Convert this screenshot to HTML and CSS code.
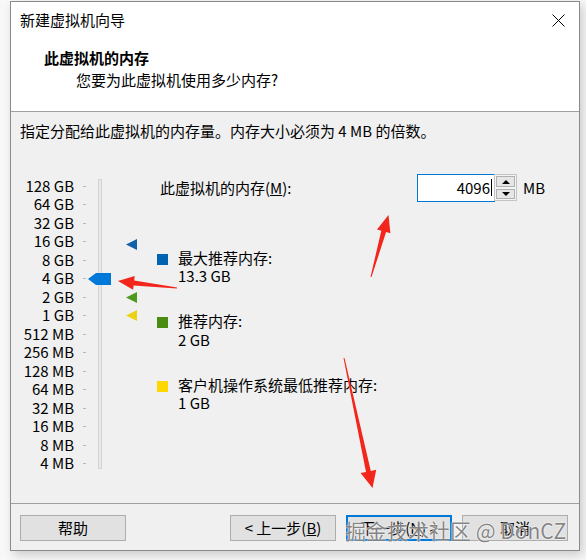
FILE: index.html
```html
<!DOCTYPE html>
<html lang="zh-CN">
<head>
    <meta charset="UTF-8">
    <title>新建虚拟机向导</title>
    <link rel="stylesheet" href="styles.css">
</head>
<body>

    <div class="wizard">
        <div class="wizard-head">
            <div class="titlebar">
                <span class="title">新建虚拟机向导</span>
                <svg class="close" width="13" height="13" viewBox="0 0 13 13">
                    <path d="M0.5 0.5 L12.5 12.5 M12.5 0.5 L0.5 12.5" stroke="#000" stroke-width="1" fill="none"/>
                </svg>
            </div>
            <div class="head-title">此虚拟机的内存</div>
            <div class="head-sub">您要为此虚拟机使用多少内存?</div>
        </div>

        <div class="wizard-body">
            <p class="intro">指定分配给此虚拟机的内存量。内存大小必须为 4 MB 的倍数。</p>

            <div class="memory">
                <div class="scale">
                    <ul class="scale-labels">
                        <li>128 GB</li>
                        <li>64 GB</li>
                        <li>32 GB</li>
                        <li>16 GB</li>
                        <li>8 GB</li>
                        <li>4 GB</li>
                        <li>2 GB</li>
                        <li>1 GB</li>
                        <li>512 MB</li>
                        <li>256 MB</li>
                        <li>128 MB</li>
                        <li>64 MB</li>
                        <li>32 MB</li>
                        <li>16 MB</li>
                        <li>8 MB</li>
                        <li>4 MB</li>
                    </ul>
                    <div class="track"></div>

                    <!-- slider thumb and the three recommendation markers -->
                    <svg class="thumb" width="23" height="12" viewBox="0 0 23 12">
                        <polygon points="0,6 8,0 23,0 23,12 8,12" fill="#0078d7"/>
                    </svg>
                    <svg class="marker marker-max" width="11" height="11" viewBox="0 0 11 11">
                        <polygon points="0,5.5 11,0 11,11" fill="#1160aa"/>
                    </svg>
                    <svg class="marker marker-rec" width="11" height="11" viewBox="0 0 11 11">
                        <polygon points="0,5.5 11,0 11,11" fill="#4f9a1c"/>
                    </svg>
                    <svg class="marker marker-min" width="11" height="11" viewBox="0 0 11 11">
                        <polygon points="0,5.5 11,0 11,11" fill="#ecd214"/>
                    </svg>
                </div>

                <div class="memory-info">
                    <div class="memory-row">
                        <label class="memory-label">此虚拟机的内存(<u>M</u>):</label>
                        <div class="memory-input"><span>4096</span><i class="caret"></i></div>
                        <div class="spin">
                            <div class="spin-btn"><span class="arrow-up"></span></div>
                            <div class="spin-btn"><span class="arrow-down"></span></div>
                        </div>
                        <span class="unit">MB</span>
                    </div>

                    <div class="legend">
                        <div class="legend-item">
                            <span class="swatch swatch-blue"></span>
                            <div>
                                <div>最大推荐内存:</div>
                                <div>13.3 GB</div>
                            </div>
                        </div>
                        <div class="legend-item">
                            <span class="swatch swatch-green"></span>
                            <div>
                                <div>推荐内存:</div>
                                <div>2 GB</div>
                            </div>
                        </div>
                        <div class="legend-item">
                            <span class="swatch swatch-yellow"></span>
                            <div>
                                <div>客户机操作系统最低推荐内存:</div>
                                <div>1 GB</div>
                            </div>
                        </div>
                    </div>
                </div>
            </div>
        </div>

        <div class="wizard-foot">
            <button class="btn">帮助</button>
            <div class="nav-buttons">
                <button class="btn">&lt; 上一步(<u>B</u>)</button>
                <button class="btn btn-default">下一步(<u>N</u>) &gt;</button>
                <button class="btn">取消</button>
            </div>
        </div>
    </div>

    <!-- red hand-drawn arrows on top of the dialog -->
    <svg class="annotations" width="586" height="560" viewBox="0 0 586 560">
        <polygon fill="#f3261b" points="118,281 134.7,276 134.2,280.4 177.1,287.5 176.9,288.5 133.6,285.4 133.1,289.8"/>
        <polygon fill="#f3261b" points="388.5,215 390.4,233.3 386.1,232.1 371.5,277.1 370.5,276.9 381.3,230.7 377,229.5"/>
        <polygon fill="#f3261b" points="372.5,488 360.6,473.1 366,471.9 343.5,358.1 344.5,357.9 370.8,470.9 376.2,469.7"/>
    </svg>

    <div class="watermark">掘金技术社区 @ DonCZ</div>

</body>
</html>
```

FILE: styles.css
```css
body {
    margin: 0;
    width: 586px;
    height: 560px;
    background-color: #f8f8f8;
    font-family: "Noto Sans CJK SC", sans-serif;
    font-size: 15px;
    color: #000;
    position: relative;
    overflow: hidden;
}

.wizard {
    margin: 1px 0 0 10px;
    width: 568px;
    border: 1px solid #8a8a8a;
    background-color: #f0f0f0;
    box-shadow: 3px 4px 10px rgba(0,0,0,0.18);
}

/* white header with title and page heading */
.wizard-head {
    height: 109px;
    background-color: white;
    border-bottom: 1px solid #a0a0a0;
}

.titlebar {
    height: 36px;
    display: flex;
    align-items: center;
    justify-content: space-between;
    padding: 0 14px 0 9px;
}

.title {
    line-height: 18px;
}

.close {
    margin-top: 1px;
}

.head-title {
    margin-top: 10px;
    padding-left: 33px;
    font-weight: bold;
    line-height: 20px;
}

.head-sub {
    margin-top: 3px;
    padding-left: 65px;
    line-height: 18.5px;
}

.wizard-body {
    height: 391px;
    padding: 10px 9px 0 9px;
    box-sizing: border-box;
}

.intro {
    margin: 0;
    line-height: 18.5px;
}

.memory {
    display: flex;
    align-items: flex-start;
    margin-top: 36.25px;
}

/* vertical slider with the size scale */
.scale {
    position: relative;
    width: 137px;
    flex-shrink: 0;
}

.scale-labels {
    list-style: none;
    margin: 0;
    padding: 0;
}

.scale-labels li {
    width: 54px;
    height: 18.5px;
    line-height: 18.5px;
    text-align: right;
    position: relative;
    white-space: nowrap;
}

.scale-labels li::after {
    content: "";
    position: absolute;
    left: 63px;
    top: 9px;
    width: 3px;
    height: 1px;
    background-color: #b8b8b8;
}

.track {
    position: absolute;
    left: 78px;
    top: 2px;
    bottom: 4px;
    width: 2px;
    border: 1px solid #d4d4d4;
    background-color: #e8e8e8;
}

.thumb {
    position: absolute;
    left: 68px;
    top: 96px;
}

.marker {
    position: absolute;
    left: 106px;
}

.marker-max {
    top: 62px;
}

.marker-rec {
    top: 115px;
}

.marker-min {
    top: 133px;
}

.memory-info {
    flex: 1;
    margin-top: -3px;
}

.memory-row {
    display: flex;
    align-items: center;
    height: 28px;
}

.memory-label {
    width: 257px;
    padding-left: 3px;
    line-height: 18.5px;
}

.memory-input {
    width: 74px;
    height: 26px;
    border: 1px solid #0078d7;
    background-color: white;
    display: flex;
    align-items: center;
    justify-content: flex-end;
    padding-right: 2px;
    box-sizing: content-box;
    margin-right: -1px;
}

.memory-input span {
    line-height: 18px;
}

.caret {
    width: 1px;
    height: 17px;
    background-color: #000;
    margin-left: 1px;
}

.spin {
    width: 19px;
    height: 25px;
    border: 1px solid #c4c4c4;
    background-color: #f4f4f4;
    padding: 0 1px;
    display: flex;
    flex-direction: column;
    justify-content: space-between;
    box-sizing: content-box;
}

.spin-btn {
    height: 10px;
    margin-top: 1px;
    margin-bottom: 1px;
    border: 1px solid #b0b0b0;
    background-color: #e6e6e6;
    display: flex;
    align-items: center;
    justify-content: center;
}

.arrow-up,
.arrow-down {
    width: 0;
    height: 0;
    border-left: 4px solid transparent;
    border-right: 4px solid transparent;
}

.arrow-up {
    border-bottom: 4px solid #000;
}

.arrow-down {
    border-top: 4px solid #000;
}

.unit {
    margin-left: 6px;
    line-height: 18.5px;
}

.legend {
    margin-top: 47px;
}

.legend-item {
    display: flex;
    align-items: flex-start;
    line-height: 18.5px;
    margin-bottom: 26.5px;
}

.swatch {
    width: 11px;
    height: 11px;
    margin: 5px 10px 0 0;
    flex-shrink: 0;
}

.swatch-blue {
    background-color: #0063b1;
}

.swatch-green {
    background-color: #4a8c12;
}

.swatch-yellow {
    background-color: #fcd800;
}

/* bottom button strip */
.wizard-foot {
    height: 47px;
    border-top: 1px solid #a0a0a0;
    padding: 11px 11px 0 9px;
    box-sizing: border-box;
    display: flex;
    justify-content: space-between;
    align-items: flex-start;
}

.nav-buttons {
    display: flex;
    gap: 10px;
}

.btn {
    width: 106px;
    height: 26px;
    padding: 0;
    border: 1px solid #adadad;
    background-color: #e1e1e1;
    font-family: "Noto Sans CJK SC", sans-serif;
    font-size: 15px;
    color: #000;
    line-height: 18px;
}

.btn-default {
    border: 2px solid #0078d7;
}

.annotations {
    position: absolute;
    left: 0;
    top: 0;
    pointer-events: none;
}

.watermark {
    position: absolute;
    left: 345px;
    top: 517px;
    font-size: 21px;
    line-height: 26px;
    white-space: nowrap;
    color: rgba(85,85,85,0.72);
    text-shadow: 0 0 2px #fff, 0 0 1px #fff;
    pointer-events: none;
}
```
